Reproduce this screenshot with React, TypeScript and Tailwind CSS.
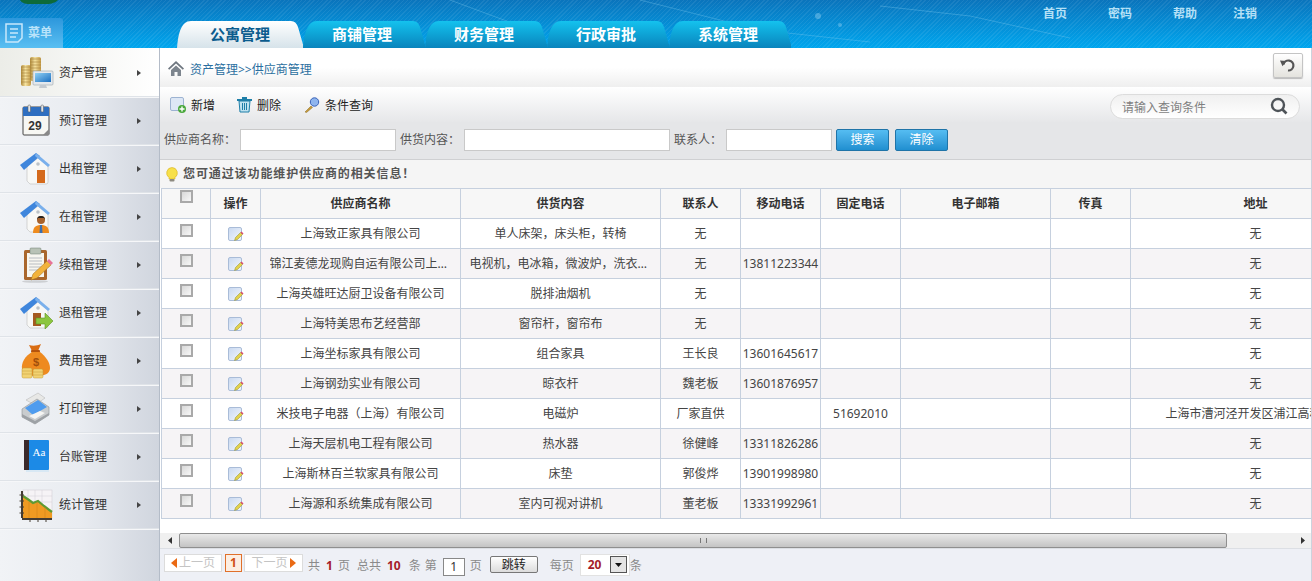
import React from "react";

const Coins = () => (
  <svg width="36" height="36" viewBox="0 0 36 36">
    <defs>
      <linearGradient id="gold" x1="0" x2="1" y1="0" y2="0"><stop offset="0" stopColor="#b08a3a" /><stop offset=".45" stopColor="#f6e3a0" /><stop offset="1" stopColor="#c49a45" /></linearGradient>
      <linearGradient id="scr" x1="0" x2="1" y1="0" y2="1"><stop offset="0" stopColor="#8fd0f5" /><stop offset="1" stopColor="#1c6fc0" /></linearGradient>
    </defs>
    <rect x="3" y="10" width="10" height="21" rx="2" fill="url(#gold)" />
    <rect x="12" y="2" width="11" height="24" rx="2" fill="url(#gold)" />
    {[12, 15, 18, 21, 24, 27].map((y) => <line key={y} x1="3" x2="13" y1={y} y2={y} stroke="#a5823a" strokeWidth=".6" />)}
    {[4, 7, 10, 13, 16, 19, 22].map((y) => <line key={y} x1="12" x2="23" y1={y} y2={y} stroke="#a5823a" strokeWidth=".6" />)}
    <rect x="15" y="16" width="20" height="14" rx="1" fill="#e4e8ec" stroke="#9aa4ad" strokeWidth=".6" />
    <rect x="17" y="18" width="16" height="9" fill="url(#scr)" />
    <path d="M22 30h6l1 3h-8z" fill="#c4cad0" />
  </svg>
);
const Calendar = () => (
  <svg width="36" height="36" viewBox="0 0 36 36">
    <rect x="5" y="4" width="26" height="28" rx="1" fill="#f7f7f3" stroke="#444" strokeWidth="1" />
    <rect x="5" y="4" width="26" height="9" fill="#2f6fc0" />
    <rect x="10" y="2" width="2.500" height="7" rx="1" fill="#dfe3e8" stroke="#555" strokeWidth=".5" />
    <rect x="23" y="2" width="2.500" height="7" rx="1" fill="#dfe3e8" stroke="#555" strokeWidth=".5" />
    <text x="17" y="27" textAnchor="middle" fontSize="12" fontWeight="700" fill="#333" fontFamily="Liberation Sans, sans-serif">29</text>
    <path d="M31 26v6h-6z" fill="#888" />
  </svg>
);
const House = ({ kind }: { kind: "door" | "man" | "arrow" }) => (
  <svg width="36" height="36" viewBox="0 0 36 36">
    <path d="M9 15L20 7l10 8v16a2 2 0 0 1-2 2H12l-3-3z" fill="#f8f8f6" stroke="#bdbdbd" strokeWidth=".6" />
    <path d="M2 14L18 2l4 3L6 19z" fill="#3f86dc" />
    <path d="M18 2l14 12-2 2L17 5z" fill="#7ab0ec" />
    <circle cx="20" cy="13" r="1.800" fill="#bcc3c9" />
    {kind === "door" && <rect x="19" y="19" width="8" height="13" fill="#d56a1c" />}
    {kind === "man" && (
      <>
        <circle cx="23" cy="21" r="4" fill="#a8622c" />
        <path d="M19 21a4 4 0 0 1 8 0l-1-2h-6z" fill="#222" />
        <path d="M15 34c0-6 3-8 8-8s8 2 8 8z" fill="#ee8b1e" />
        <path d="M22 26h2l.5 8h-3z" fill="#3b6fb0" />
      </>
    )}
    {kind === "arrow" && (
      <>
        <rect x="15" y="18" width="8" height="13" fill="#a55a20" />
        <path d="M18 23h9v-5l8 8-8 8v-5h-9z" fill="#8cc63f" stroke="#5f9424" strokeWidth=".6" />
      </>
    )}
  </svg>
);
const Clipboard = () => (
  <svg width="36" height="36" viewBox="0 0 36 36">
    <rect x="6" y="3" width="23" height="30" rx="1.500" fill="#a9662c" />
    <rect x="9" y="6" width="17" height="24" fill="#f7f6f0" />
    <rect x="12" y="1" width="11" height="6" rx="1" fill="#b8c2b6" stroke="#6f7f70" strokeWidth=".5" />
    {[11, 14, 17, 20, 23].map((y) => <line key={y} x1="11" x2="24" y1={y} y2={y} stroke="#aab0b6" strokeWidth=".8" />)}
    <path d="M13 33l2-6 14-13 4 4-14 13z" fill="#f2b23c" stroke="#a06f1c" strokeWidth=".5" />
    <path d="M29 14l2-2 4 4-2 2z" fill="#e8729a" />
    <ellipse cx="17" cy="34.500" rx="13" ry="1.300" fill="#00000022" />
  </svg>
);
const Bag = () => (
  <svg width="36" height="36" viewBox="0 0 36 36">
    <path d="M11 2c3 1 8 1 12-1l-3 7h-6z" fill="#d96d14" />
    <rect x="13" y="7" width="9" height="2.500" rx="1" fill="#b5530c" />
    <path d="M14 9C7 13 3 20 4 26c1 5 6 7 14 7s14-2 14-8c0-6-5-12-10-16z" fill="#ee8a1f" />
    <text x="18" y="23" textAnchor="middle" fontSize="11" fontWeight="700" fill="#a04f0c" fontFamily="Liberation Sans, sans-serif">$</text>
    <rect x="4" y="25" width="10" height="10" rx="1.500" fill="#f2d272" stroke="#c39a38" strokeWidth=".5" />
    <rect x="15" y="26" width="10" height="9" rx="1.500" fill="#f2d272" stroke="#c39a38" strokeWidth=".5" />
    <path d="M4 28h10M4 31h10M15 29h10M15 32h10" stroke="#c39a38" strokeWidth=".5" />
  </svg>
);
const Printer = () => (
  <svg width="36" height="36" viewBox="0 0 36 36">
    <path d="M8 9l12-7 7 5-10 7z" fill="#e8e8e6" stroke="#b0b0b0" strokeWidth=".5" />
    <path d="M4 18L19 8l12 8v8L17 33 4 26z" fill="#c9ccce" stroke="#8c9094" strokeWidth=".6" />
    <path d="M7 17l13-8 9 7-14 8z" fill="#4f9cee" />
    <path d="M4 23l13 7 14-8v2L17 33 4 26z" fill="#9da1a5" />
    <path d="M11 25l6 3 10-6-5-2z" fill="#f5f5f3" />
  </svg>
);
const Book = () => (
  <svg width="36" height="36" viewBox="0 0 36 36">
    <rect x="6" y="1" width="25" height="30" rx="1" fill="#1c8ae6" />
    <rect x="6" y="1" width="5" height="30" fill="#3b2a2a" />
    <rect x="8" y="31" width="23" height="2" fill="#d8e8f4" />
    <text x="21" y="17" textAnchor="middle" fontSize="11" fill="#fff" fontFamily="Liberation Serif, serif">Aa</text>
  </svg>
);
const Chart = () => (
  <svg width="36" height="36" viewBox="0 0 36 36">
    <rect x="5" y="3" width="29" height="28" fill="#f6f3f6" stroke="#d4d0d8" strokeWidth=".6" />
    {[10, 17, 24].map((x) => <line key={x} x1={x} x2={x} y1="3" y2="31" stroke="#d0ccd4" strokeWidth=".5" />)}
    {[9, 15].map((y) => <line key={y} x1="5" x2="34" y1={y} y2={y} stroke="#d0ccd4" strokeWidth=".5" />)}
    <path d="M5 9l6 4 4 3 5-2 6 5 8 6v6H5z" fill="#ef9a22" />
    <path d="M5 9l6 4 4 3 5-2 6 5 8 6" fill="none" stroke="#5f9a33" strokeWidth="2.200" />
    <path d="M11 15v16M19 15v16M27 20v11" stroke="#c97d18" strokeWidth=".5" />
    <rect x="4" y="31" width="30" height="2" fill="#443c33" />
    <rect x="3" y="4" width="2" height="27" fill="#443c33" />
    {[8, 14, 20, 26].map((y) => <line key={y} x1="1.500" x2="6" y1={y} y2={y} stroke="#443c33" />)}
    {[12, 20, 28].map((x) => <line key={x} x1={x} x2={x} y1="31" y2="35" stroke="#443c33" />)}
  </svg>
);

const menu: [string, React.ReactNode][] = [
  ["资产管理", <Coins />],
  ["预订管理", <Calendar />],
  ["出租管理", <House kind="door" />],
  ["在租管理", <House kind="man" />],
  ["续租管理", <Clipboard />],
  ["退租管理", <House kind="arrow" />],
  ["费用管理", <Bag />],
  ["打印管理", <Printer />],
  ["台账管理", <Book />],
  ["统计管理", <Chart />],
];

const rows = [
  ["上海致正家具有限公司", "单人床架，床头柜，转椅", "无", "", "", "无"],
  ["锦江麦德龙现购自运有限公司上海分公司", "电视机，电冰箱，微波炉，洗衣机，空调", "无", "13811223344", "", "无"],
  ["上海英雄旺达厨卫设备有限公司", "脱排油烟机", "无", "", "", "无"],
  ["上海特美思布艺经营部", "窗帘杆，窗帘布", "无", "", "", "无"],
  ["上海坐标家具有限公司", "组合家具", "王长良", "13601645617", "", "无"],
  ["上海钢劲实业有限公司", "晾衣杆", "魏老板", "13601876957", "", "无"],
  ["米技电子电器（上海）有限公司", "电磁炉", "厂家直供", "", "51692010", "上海市漕河泾开发区浦江高科技园"],
  ["上海天层机电工程有限公司", "热水器", "徐健峰", "13311826286", "", "无"],
  ["上海斯林百兰软家具有限公司", "床垫", "郭俊烨", "13901998980", "", "无"],
  ["上海源和系统集成有限公司", "室内可视对讲机", "董老板", "13331992961", "", "无"],
];

const Box = () => (
  <span className="block w-[13px] h-[13px] mx-auto border-2 border-[#a9a9a9] bg-gradient-to-br from-[#d8d8d8] to-[#f8f8f8]" />
);
const EditIcon = () => (
  <svg width="16" height="16" viewBox="0 0 16 16" className="block mx-auto">
    <defs>
      <linearGradient id="ed" x1="0" y1="0" x2="1" y2="1"><stop offset="0" stopColor="#c8d8f0" /><stop offset="1" stopColor="#f4f7fc" /></linearGradient>
    </defs>
    <rect x=".5" y="1.500" width="13" height="13" rx="1.500" fill="url(#ed)" stroke="#a9bcd8" />
    <path d="M6.500 14.500l1-3 5-5 2 2-5 5z" fill="#e3d24a" stroke="#8e8a32" strokeWidth=".5" />
    <path d="M12.500 6.500l1-1 2 2-1 1z" fill="#d9486e" />
  </svg>
);
const Arrow = ({ left }: { left?: boolean }) => (
  <svg width="6" height="10" viewBox="0 0 6 10"><path d={left ? "M6 0v10L0 5z" : "M0 0v10l6-5z"} fill="#ea6a14" /></svg>
);

const tabs = ["公寓管理", "商铺管理", "财务管理", "行政审批", "系统管理"];

export default function App() {
  const th = "border border-[#c6d0de] font-bold text-[12px] text-[#333] p-0 pt-px h-[30px] bg-[#f7f7f7]";
  const td = "border border-[#c6d0de] text-[12px] text-[#444] p-0 h-[30px] text-center whitespace-nowrap overflow-hidden";
  return (
    <div className="h-[581px] w-[1312px] overflow-hidden flex flex-col bg-white font-['Noto_Sans','Noto_Sans_CJK_SC',sans-serif]">
      {/* header */}
      <header className="relative h-12 shrink-0 flex items-end bg-[repeating-linear-gradient(135deg,rgba(255,255,255,0.07)_0px,rgba(255,255,255,0.07)_1px,transparent_1px,transparent_3px),linear-gradient(to_bottom,#0a74bc,#00a6ee)]">
        <svg className="absolute inset-0" width="1312" height="48" viewBox="0 0 1312 48">
          <path d="M20 0c3 5 10 4 18 4s15 1 20-4z" fill="#0d6a3a" />
          <path d="M450 0l70 26M640 0l120 30 110 12M880 6l90 10 100 22" stroke="#7fc8ee" strokeOpacity=".35" fill="none" />
          <circle cx="818" cy="16" r="3" fill="#9ed8f4" fillOpacity=".4" />
          <circle cx="840" cy="25" r="2" fill="#9ed8f4" fillOpacity=".4" />
        </svg>
        <div className="relative flex items-center gap-[5px] w-[63px] h-[30px] pl-[5px] rounded-tr-[3px] bg-gradient-to-b from-[#2c97dc] to-[#59bff2]">
          <svg width="18" height="20" viewBox="0 0 18 20" fill="none" stroke="#c7e8fb" strokeWidth="1.500"><path d="M1 1h16v14l-4 4H1z" /><path d="M5 6h8M5 10h8M5 14h6" /></svg>
          <span className="text-[12px] font-bold text-[#b9e3fa]">菜单</span>
        </div>
        <nav className="relative ml-[114px] flex h-[27px]">
          {tabs.map((t, i) => (
            <div
              key={t}
              className={
                i === 0
                  ? "w-[126px] h-[27px] flex items-center justify-center text-[15px] font-bold text-[#0b5c8e] bg-gradient-to-b from-white to-[#d6e3ea] [clip-path:path('M0_27C1_15_3_6_8_2Q10_0_14_0H114Q119_0_121_6L127_27Z')]"
                  : "w-[122px] h-[27px] pr-[4px] flex items-center justify-center text-[15px] font-bold text-white bg-gradient-to-b from-[#14c2ee] to-[#0a84bc] [clip-path:path('M0_27C1_15_3_6_8_2Q10_0_14_0H110Q115_0_117_6L123_27Z')]"
              }
            >
              {t}
            </div>
          ))}
        </nav>
        <div className="absolute top-[5px] left-[1043px] flex text-[12px] font-bold text-[#b5e0f6]">
          <span className="w-[65px]">首页</span>
          <span className="w-[65px]">密码</span>
          <span className="w-[60px]">帮助</span>
          <span>注销</span>
        </div>
      </header>

      <div className="flex flex-1 min-h-0">
        {/* sidebar */}
        <aside className="w-[160px] shrink-0 border-r border-[#b4bcc8] bg-gradient-to-r from-[#f1f3f6] via-[#e9ecf1] to-[#d0d5de]">
          {menu.map(([label, icon], i) => (
            <div
              key={label}
              className={
                i === 0
                  ? "h-[49px] pt-px flex items-center border-b border-[#dfe3e8] shadow-[0_1px_0_#f6f7f9] bg-gradient-to-r from-[#ecede8] to-white"
                  : "h-12 flex items-center border-b border-[#dfe3e8] shadow-[0_1px_0_#f6f7f9]"
              }
            >
              <span className="w-[59px] pl-[18px] shrink-0 flex items-center">{icon}</span>
              <span className="w-[78px] text-[12px] text-[#333]">{label}</span>
              <svg width="4" height="6" viewBox="0 0 4 6"><path d="M0 0v6l4-3z" fill="#444" /></svg>
            </div>
          ))}
        </aside>

        {/* main */}
        <main className="flex-1 min-w-0 flex flex-col border-r border-[#ccd3dd]">
          <div className="h-[39px] shrink-0 flex items-center pl-2 pr-[8px] bg-gradient-to-b from-white via-white to-[#efefef]">
            <svg width="16" height="15" viewBox="0 0 16 15" className="mt-[1px]"><path d="M8 0L0 7.500l1.200 1.200L8 2.500l6.800 6.200L16 7.500z" fill="#6f7780" /><path d="M3 9l5-4.500L13 9v6H9.500v-4h-3v4H3z" fill="#7d858e" /></svg>
            <span className="ml-[6px] mt-[5px] text-[12px] text-[#2b6f9f]">资产管理&gt;&gt;供应商管理</span>
            <button className="ml-auto mt-[-5px] w-[30px] h-[25px] flex items-center justify-center rounded-[2px] border border-[#c4c4c4] bg-gradient-to-b from-white to-[#e4e3de] shadow-[0_1px_1px_#bbb]">
              <svg width="16" height="14" viewBox="0 0 16 14" fill="none"><path d="M3.500 6.500A5 5 0 1 1 8 12.500" stroke="#555" strokeWidth="2.200" /><path d="M0 2.500l6.500.6-4 5.200z" fill="#555" /></svg>
            </button>
          </div>

          <div className="h-[35px] shrink-0 flex items-center pl-[10px] pr-[11px] bg-gradient-to-b from-white to-[#e6e7e9] text-[12px] text-[#222]">
            <svg width="16" height="16" viewBox="0 0 16 16"><rect x=".5" y=".5" width="13" height="13" rx="1.500" fill="#dde7f5" stroke="#9db3d2" /><circle cx="12" cy="12" r="4" fill="#4aa83c" /><path d="M12 9.500v5M9.500 12h5" stroke="#fff" strokeWidth="1.400" /></svg>
            <span className="ml-[5px] mt-[2px]">新增</span>
            <svg width="17" height="17" viewBox="0 0 17 17" className="ml-[21px]"><path d="M1 3h15v2H1z" fill="#1e7fa8" /><path d="M6 1h5v2H6z" fill="#1e7fa8" /><path d="M3 5h11l-1 11H4z" fill="#bfe2f0" stroke="#1e7fa8" /><path d="M6.500 7v7M8.500 7v7M10.500 7v7" stroke="#1e7fa8" /></svg>
            <span className="ml-[4px] mt-[2px]">删除</span>
            <svg width="16" height="16" viewBox="0 0 16 16" className="ml-[23px]"><path d="M1 15l6-6 1.500 1.500-6 5z" fill="#c49a3c" stroke="#8a6a20" strokeWidth=".5" /><circle cx="10.500" cy="5" r="4.200" fill="#8fb5ee" stroke="#3a62b8" /></svg>
            <span className="ml-[5px] mt-[2px]">条件查询</span>
            <div className="ml-auto mt-[3px] w-[190px] h-[25px] flex items-center justify-between pl-[11px] pr-[11px] rounded-full border border-[#dcdcdc] bg-gradient-to-b from-[#f0f0f0] to-white text-[#7f7f7f]">
              <span className="mt-[3px]">请输入查询条件</span>
              <svg width="18" height="18" viewBox="0 0 18 18" fill="none"><circle cx="8" cy="8" r="6" stroke="#4f5459" strokeWidth="2.400" /><path d="M12.500 12.500l4 4" stroke="#4f5459" strokeWidth="2.600" /></svg>
            </div>
          </div>

          <div className="h-[38px] shrink-0 flex items-center pl-1 pb-px bg-[#e5e6e8] border-b border-[#cfd0d2] text-[12px] text-[#555]">
            <span className="w-[76px]">供应商名称：</span>
            <span className="w-[156px] h-[22px] border border-[#c9c9c9] bg-white" />
            <span className="w-[64px] ml-[4px] whitespace-nowrap">供货内容：</span>
            <span className="w-[206px] h-[22px] border border-[#c9c9c9] bg-white" />
            <span className="w-[52px] ml-[4px] whitespace-nowrap">联系人：</span>
            <span className="w-[106px] h-[22px] border border-[#c9c9c9] bg-white" />
            <span className="ml-[4px] w-[53px] h-[22px] flex items-center justify-center rounded-[2px] border border-[#1f74a8] text-white bg-gradient-to-b from-[#55bdf2] to-[#1f8fd0]">搜索</span>
            <span className="ml-[6px] w-[53px] h-[22px] flex items-center justify-center rounded-[2px] border border-[#1f74a8] text-white bg-gradient-to-b from-[#55bdf2] to-[#1f8fd0]">清除</span>
          </div>

          <div className="h-[28px] shrink-0 flex items-center pl-[6px] bg-[#f5f5f5] text-[12px] font-bold tracking-[0.9px] text-[#555]">
            <svg width="12" height="15" viewBox="0 0 12 15"><path d="M6 .5a5.500 5.500 0 0 0-3 10V12h6v-1.500A5.500 5.500 0 0 0 6 .5z" fill="#f7e04a" stroke="#d6b020" strokeWidth=".6" /><rect x="3.500" y="12" width="5" height="2.500" rx="1" fill="#8d8a80" /></svg>
            <span className="ml-[5px]">您可通过该功能维护供应商的相关信息！</span>
          </div>

          <div className="h-[345px] shrink-0 pl-px overflow-hidden bg-white">
            <table className="table-fixed border-collapse w-[1219px]">
              <colgroup>
                <col className="w-[49px]" /><col className="w-[50px]" /><col className="w-[200px]" /><col className="w-[200px]" /><col className="w-[80px]" /><col className="w-[80px]" /><col className="w-[80px]" /><col className="w-[150px]" /><col className="w-[80px]" /><col className="w-[250px]" />
              </colgroup>
              <thead>
                <tr>
                  <th className={`${th} align-top pt-[5px]`}><Box /></th>
                  <th className={th}>操作</th>
                  <th className={th}>供应商名称</th>
                  <th className={th}>供货内容</th>
                  <th className={th}>联系人</th>
                  <th className={th}>移动电话</th>
                  <th className={th}>固定电话</th>
                  <th className={th}>电子邮箱</th>
                  <th className={th}>传真</th>
                  <th className={th}>地址</th>
                </tr>
              </thead>
              <tbody>
                {rows.map((r, i) => (
                  <tr key={r[0]} className={i % 2 ? "bg-[#f6f4f6]" : "bg-white"}>
                    <td className={`${td} align-top pt-[5px]`}><Box /></td>
                    <td className={`${td} align-top pt-[7px]`}><EditIcon /></td>
                    <td className={td}><div className="w-[182px] mx-auto truncate">{r[0]}</div></td>
                    <td className={td}><div className="w-[182px] mx-auto truncate">{r[1]}</div></td>
                    <td className={td}>{r[2]}</td>
                    <td className={td}>{r[3]}</td>
                    <td className={td}>{r[4]}</td>
                    <td className={td} />
                    <td className={td} />
                    <td className={td}>{r[5]}</td>
                  </tr>
                ))}
              </tbody>
            </table>
          </div>

          {/* scrollbar */}
          <div className="h-4 shrink-0 flex items-center bg-[#f0f0f0] border-b border-[#dcdfe4]">
            <span className="w-[19px] flex justify-center"><svg width="4" height="7" viewBox="0 0 4 7"><path d="M4 0v7L0 3.500z" fill="#333" /></svg></span>
            <div className="w-[1048px] h-[15px] flex items-center justify-center rounded-[2px] border border-[#8f8f8f] bg-gradient-to-b from-[#e9e9e9] to-[#c4c4c4]">
              <span className="w-[7px] h-[5px] border-x border-[#777]" />
            </div>
            <span className="ml-auto mr-[6px]"><svg width="4" height="7" viewBox="0 0 4 7"><path d="M0 0v7l4-3.500z" fill="#333" /></svg></span>
          </div>

          {/* pager */}
          <div className="flex-1 flex items-center pl-1 pb-[5px] bg-[#eef0f6] text-[12px] text-[#8a8a8a]">
            <span className="w-[58px] h-[18px] flex items-center justify-center gap-[2px] border border-[#dcdcdc] bg-white text-[#c4c4c4]"><Arrow left />上一页</span>
            <span className="ml-[3px] w-[17px] h-[18px] flex items-center justify-center border border-[#e0702a] bg-[#fdeee2] text-[#d0521a] font-bold">1</span>
            <span className="ml-[2px] w-[59px] h-[18px] flex items-center justify-center gap-[2px] border border-[#dcdcdc] bg-white text-[#c4c4c4]">下一页<Arrow /></span>
            <span className="ml-[5px] mt-[6px]">共</span>
            <b className="ml-[6px] mt-[6px] text-[#a51c2a]">1</b>
            <span className="ml-[5px] mt-[6px]">页</span>
            <span className="ml-[7px] mt-[6px]">总共</span>
            <b className="ml-[6px] mt-[6px] text-[#a51c2a]">10</b>
            <span className="ml-[8px] mt-[6px]">条</span>
            <span className="ml-[4px] mt-[6px]">第</span>
            <span className="ml-[6px] mt-[9px] w-[22px] h-[18px] flex items-center justify-center border border-[#888] bg-white text-[#333]">1</span>
            <span className="ml-[5px] mt-[6px]">页</span>
            <span className="ml-[8px] mt-[4px] w-[48px] h-[17px] flex items-center justify-center rounded-[2px] border border-[#777] bg-gradient-to-b from-white to-[#dcdcdc] text-[#222]">跳转</span>
            <span className="ml-[12px] mt-[6px]">每页</span>
            <span className="ml-[6px] mt-[4px] w-[50px] h-[22px] flex items-center justify-between pl-[7px] pr-[2px] border border-[#e2e2e2] bg-white text-[#a51c2a] font-bold">
              20
              <span className="w-[17px] h-[17px] flex items-center justify-center border border-[#555] bg-[#e4e4e4]"><svg width="7" height="4" viewBox="0 0 7 4"><path d="M0 0h7L3.500 4z" fill="#111" /></svg></span>
            </span>
            <span className="mt-[6px]">条</span>
          </div>
        </main>
      </div>
    </div>
  );
}
